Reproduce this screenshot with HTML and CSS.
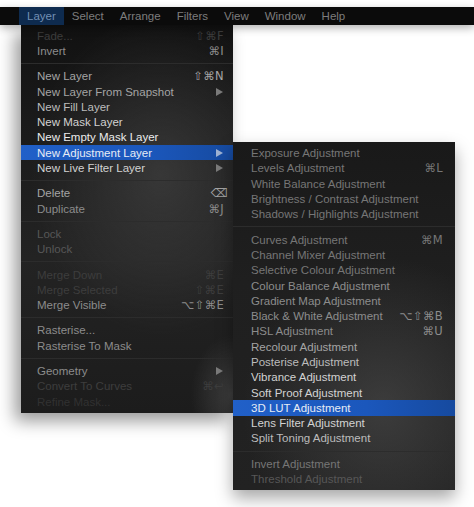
FILE: index.html
```html
<!DOCTYPE html>
<html>
<head>
<meta charset="utf-8">
<link rel="stylesheet" href="styles.css">
</head>
<body>
<div class="menubar">
  <span class="mb-item mb-open">Layer</span>
  <span class="mb-item">Select</span>
  <span class="mb-item">Arrange</span>
  <span class="mb-item">Filters</span>
  <span class="mb-item">View</span>
  <span class="mb-item">Window</span>
  <span class="mb-item">Help</span>
</div>
<div class="menus">
  <div class="menu main">
    <div class="row off"><span>Fade...</span><span class="key">⇧⌘F</span></div>
    <div class="row l4"><span>Invert</span><span class="key">⌘I</span></div>
    <div class="sep"></div>
    <div class="row l3"><span>New Layer</span><span class="key">⇧⌘N</span></div>
    <div class="row l3"><span>New Layer From Snapshot</span><span class="arrow"></span></div>
    <div class="row l2"><span>New Fill Layer</span></div>
    <div class="row l1"><span>New Mask Layer</span></div>
    <div class="row l0"><span>New Empty Mask Layer</span></div>
    <div class="row active"><span>New Adjustment Layer</span><span class="arrow"></span></div>
    <div class="row l1"><span>New Live Filter Layer</span><span class="arrow"></span></div>
    <div class="sep"></div>
    <div class="row l3"><span>Delete</span><span class="key del">⌫</span></div>
    <div class="row l4"><span>Duplicate</span><span class="key">⌘J</span></div>
    <div class="sep"></div>
    <div class="row l6"><span>Lock</span></div>
    <div class="row l6"><span>Unlock</span></div>
    <div class="sep"></div>
    <div class="row off"><span>Merge Down</span><span class="key">⌘E</span></div>
    <div class="row off"><span>Merge Selected</span><span class="key">⇧⌘E</span></div>
    <div class="row l4"><span>Merge Visible</span><span class="key">⌥⇧⌘E</span></div>
    <div class="sep"></div>
    <div class="row l4"><span>Rasterise...</span></div>
    <div class="row l4"><span>Rasterise To Mask</span></div>
    <div class="sep"></div>
    <div class="row l4"><span>Geometry</span><span class="arrow"></span></div>
    <div class="row off"><span>Convert To Curves</span><span class="key">⌘↩</span></div>
    <div class="row off2"><span>Refine Mask...</span></div>
  </div>
  <div class="menu sub">
    <div class="row l5"><span>Exposure Adjustment</span></div>
    <div class="row l5"><span>Levels Adjustment</span><span class="key">⌘L</span></div>
    <div class="row l5"><span>White Balance Adjustment</span></div>
    <div class="row l5"><span>Brightness / Contrast Adjustment</span></div>
    <div class="row l5"><span>Shadows / Highlights Adjustment</span></div>
    <div class="sep"></div>
    <div class="row l5"><span>Curves Adjustment</span><span class="key">⌘M</span></div>
    <div class="row l5"><span>Channel Mixer Adjustment</span></div>
    <div class="row l5"><span>Selective Colour Adjustment</span></div>
    <div class="row l4"><span>Colour Balance Adjustment</span></div>
    <div class="row l4"><span>Gradient Map Adjustment</span></div>
    <div class="row l4"><span>Black &amp; White Adjustment</span><span class="key">⌥⇧⌘B</span></div>
    <div class="row l4"><span>HSL Adjustment</span><span class="key">⌘U</span></div>
    <div class="row l3"><span>Recolour Adjustment</span></div>
    <div class="row l2"><span>Posterise Adjustment</span></div>
    <div class="row l1"><span>Vibrance Adjustment</span></div>
    <div class="row l1"><span>Soft Proof Adjustment</span></div>
    <div class="row active"><span>3D LUT Adjustment</span></div>
    <div class="row l1"><span>Lens Filter Adjustment</span></div>
    <div class="row l2"><span>Split Toning Adjustment</span></div>
    <div class="sep"></div>
    <div class="row l5"><span>Invert Adjustment</span></div>
    <div class="row l6"><span>Threshold Adjustment</span></div>
  </div>
</div>
</body>
</html>
```
FILE: styles.css
```css
html, body {
  margin: 0;
  padding: 0;
  background: #ffffff;
}
html {
  height: 100%;
}
body {
  box-sizing: border-box;
  min-height: 100%;
  font-family: "Liberation Sans", Arial, sans-serif;
  font-size: 11.5px;
  padding-top: 7px;
}
.menubar {
  display: flex;
  height: 18px;
  align-items: stretch;
  background: #0b0b0b;
  padding-left: 19px;
  box-shadow: 0 3px 8px rgba(0, 0, 0, 0.3);
  position: relative;
  z-index: 2;
}
.mb-item {
  display: flex;
  align-items: center;
  padding: 0 8px;
  color: #7d7d7d;
}
.mb-open {
  background: #0e2b4f;
  color: #7390b4;
}
.menus {
  position: relative;
  margin-left: 21px;
  width: 212px;
  padding-bottom: 80px;
}
.menu {
  display: flex;
  flex-direction: column;
}
.main {
  width: 212px;
  padding: 3px 0 4px;
  background:
    radial-gradient(ellipse 130px 160px at 140px 150px, rgba(72, 72, 72, 0.6), rgba(72, 72, 72, 0)),
    radial-gradient(ellipse 40px 60px at 210px 370px, rgba(85, 85, 85, 0.55), rgba(85, 85, 85, 0)),
    linear-gradient(#111111, #1a1a1a 25%, #232323 60%, #1c1c1c);
  box-shadow: -6px 8px 16px rgba(0, 0, 0, 0.4);
}
.sub {
  position: absolute;
  left: 212px;
  top: 117px;
  width: 222px;
  padding: 3.5px 0 3px;
  background:
    radial-gradient(ellipse 140px 150px at 150px 265px, rgba(78, 78, 78, 0.6), rgba(78, 78, 78, 0)),
    linear-gradient(#191919, #1f1f1f 40%, #222222);
  box-shadow: 0 8px 16px rgba(0, 0, 0, 0.35);
  z-index: 1;
}
.row {
  display: flex;
  justify-content: space-between;
  align-items: center;
  height: 15.3px;
  padding: 0 9px 0 16px;
  white-space: nowrap;
}
.sub .row {
  padding: 0 12px 0 18px;
}
.key {
  font-family: "DejaVu Sans", sans-serif;
  font-size: 11.5px;
  letter-spacing: 0.3px;
}
.key.del {
  font-size: 12px;
  margin-right: -4px;
}
.arrow {
  width: 0;
  height: 0;
  border-top: 4px solid transparent;
  border-bottom: 4px solid transparent;
  border-left: 7px solid #7a7a7a;
  margin-right: 1px;
}
.sep {
  height: 1px;
  margin: 4.5px 0;
  background: #2c2c2c;
}
.active {
  background: linear-gradient(to right, #2160c8, #1b57bc 60%, #164a9f);
  color: #e6ecf5;
}
.active .arrow {
  border-left-color: #9fb3d3;
}
.l0 { color: #ececec; }
.l1 { color: #d2d2d2; }
.l2 { color: #bcbcbc; }
.l3 { color: #a4a4a4; }
.l4 { color: #8c8c8c; }
.l5 { color: #767676; }
.l6 { color: #575757; }
.off { color: #3d3d3d; }
.off2 { color: #313131; }
```
